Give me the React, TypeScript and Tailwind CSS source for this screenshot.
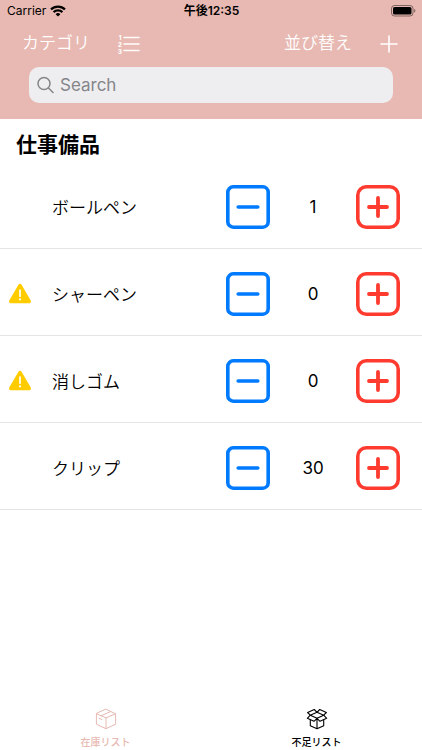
import { useState } from 'react';

interface StockItem {
  id: number;
  name: string;
  count: number;
}

const initialItems: StockItem[] = [
  { id: 1, name: 'ボールペン', count: 1 },
  { id: 2, name: 'シャーペン', count: 0 },
  { id: 3, name: '消しゴム', count: 0 },
  { id: 4, name: 'クリップ', count: 30 },
];

function WifiIcon() {
  return (
    <svg width="16" height="12" viewBox="0 0 16 12" fill="none" stroke="black" strokeWidth="2.2" aria-hidden="true">
      <path d="M1 4.4a10 10 0 0 1 14 0" />
      <path d="M3.6 7.1a6.3 6.3 0 0 1 8.8 0" />
      <path d="M8 11.6 5.6 9.2a3.4 3.4 0 0 1 4.8 0Z" fill="black" stroke="none" />
    </svg>
  );
}

function BatteryIcon() {
  return (
    <svg width="25" height="12" viewBox="0 0 25 12" aria-hidden="true">
      <rect x="0.5" y="0.5" width="21.5" height="10.5" rx="3" fill="none" stroke="black" strokeOpacity="0.45" />
      <rect x="2" y="2" width="18.5" height="7.5" rx="1.6" />
      <path d="M23.2 4v3.6c.8-.3 1.2-1 1.2-1.8s-.4-1.5-1.2-1.8Z" fillOpacity="0.5" />
    </svg>
  );
}

function NumberedListIcon() {
  return (
    <span className="flex items-center gap-px">
      <span className="flex flex-col text-[6px] leading-[7px] font-extrabold" aria-hidden="true">
        <span>1</span>
        <span>2</span>
        <span>3</span>
      </span>
      <svg width="17" height="20" viewBox="0 0 17 20" stroke="white" strokeWidth="1.5" strokeLinecap="round" aria-hidden="true">
        <path d="M1 3.5h15M1 10h15M1 16.5h15" />
      </svg>
    </span>
  );
}

function WarningIcon() {
  return (
    <svg width="24" height="22" viewBox="0 0 24 22" role="img" aria-label="不足">
      <path
        d="M12 2.6 21.2 18.4H2.8Z"
        fill="#ffcc00"
        stroke="#ffcc00"
        strokeWidth="3.6"
        strokeLinejoin="round"
      />
      <path d="M12 7v6.2" stroke="white" strokeWidth="1.7" strokeLinecap="round" />
      <circle cx="12" cy="16.3" r="1.1" fill="white" />
    </svg>
  );
}

function MinusSquare() {
  return (
    <svg width="44" height="44" viewBox="0 0 44 44" fill="none" stroke="#007aff" aria-hidden="true">
      <rect x="1.8" y="1.8" width="40.4" height="40.4" rx="5.5" strokeWidth="3.6" />
      <path d="M12.2 22h19.6" strokeWidth="3.6" strokeLinecap="round" />
    </svg>
  );
}

function PlusSquare() {
  return (
    <svg width="44" height="44" viewBox="0 0 44 44" fill="none" stroke="#ff3b30" aria-hidden="true">
      <rect x="1.8" y="1.8" width="40.4" height="40.4" rx="8.5" strokeWidth="3.6" />
      <path d="M13 22h18M22 13v18" strokeWidth="3.8" strokeLinecap="round" />
    </svg>
  );
}

function ClosedBoxIcon() {
  return (
    <svg width="22" height="22" viewBox="0 0 22 22" fill="none" stroke="currentColor" strokeLinejoin="round" strokeLinecap="round" aria-hidden="true">
      <path d="M11 1.3 20.6 5.8v10.4L11 20.7 1.4 16.2V5.8Z" />
      <path d="M1.4 5.8 11 9.8l9.6-4M11 9.8v10.9M6 7.9l9.7-4.4M4 10.3l2.8 1.3" />
    </svg>
  );
}

function OpenBoxIcon() {
  return (
    <svg width="22" height="22" viewBox="0 0 22 22" fill="none" stroke="currentColor" strokeWidth="1.1" strokeLinejoin="round" aria-hidden="true">
      <path d="M11 4.3 8.3 1.5 1.6 4.5 4.3 7.2 1.3 10.3 8 13.3 11 10.3 14 13.3 20.7 10.3 17.7 7.2 20.4 4.5 13.7 1.5Z" />
      <path d="M11 4.3 4.3 7.2 11 10.3 17.7 7.2Z" />
      <path d="M4.3 11.7v6L11 20.7l6.7-3v-6M11 10.3v10.4" />
    </svg>
  );
}

export default function App() {
  const [items, setItems] = useState(initialItems);
  const [tab, setTab] = useState('stock');

  const change = (id: number, by: number) => {
    setItems(items.map((item) => (item.id === id ? { ...item, count: Math.max(0, item.count + by) } : item)));
  };

  return (
    <div className="min-h-screen flex flex-col bg-white text-black font-['Inter','Noto_Sans_CJK_JP',sans-serif]">
      <header className="bg-[#e8b9b2] pb-4">
        <div className="grid grid-cols-3 items-center h-[22px] pl-[7px] pr-[6px] text-[12px]">
          <div className="flex items-center gap-1">
            <span>Carrier</span>
            <WifiIcon />
          </div>
          <span className="text-center font-semibold">午後12:35</span>
          <div className="flex justify-end">
            <BatteryIcon />
          </div>
        </div>

        <nav className="flex items-center justify-between h-11 mb-px pl-[22px] pr-6 text-[17px] font-[350] text-white">
          <div className="flex items-center gap-7">
            <button type="button">カテゴリ</button>
            <button type="button" aria-label="番号順">
              <NumberedListIcon />
            </button>
          </div>
          <div className="flex items-center gap-7">
            <button type="button">並び替え</button>
            <button type="button" aria-label="追加">
              <svg width="18" height="18" viewBox="0 0 18 18" stroke="white" strokeWidth="1.6" strokeLinecap="round" aria-hidden="true">
                <path d="M1 9h16M9 1v16" />
              </svg>
            </button>
          </div>
        </nav>

        <label className="flex items-center gap-[6px] h-9 mx-[29px] px-2 rounded-[10px] bg-[#eeeef0]">
          <svg width="17" height="18" viewBox="0 0 17 18" fill="none" stroke="#85858a" strokeWidth="1.5" strokeLinecap="round" aria-hidden="true">
            <circle cx="7" cy="7.5" r="6" />
            <path d="m11.5 12 4.5 4.5" />
          </svg>
          <input
            type="search"
            aria-label="Search"
            placeholder="Search"
            className="flex-1 min-w-0 pt-0.5 bg-transparent text-[17px] placeholder:text-[#85858a] focus:outline-none"
          />
        </label>
      </header>

      <main className="flex-1">
        <h1 className="h-[43px] pt-[11px] pl-4 text-[21px] leading-[30px] font-bold">仕事備品</h1>
        <ul>
          {items.map((item) => (
            <li key={item.id} className="flex items-center h-[87px] pt-1 pl-2 pr-[22px] border-b border-[#e5e5e5] text-[17px]">
              <span className="w-11 shrink-0">{item.count === 0 && <WarningIcon />}</span>
              <span className="flex-1 pt-1 font-[350]">{item.name}</span>
              <button type="button" aria-label={`${item.name}を減らす`} onClick={() => change(item.id, -1)}>
                <MinusSquare />
              </button>
              <span className="w-[86px] pt-0.5 text-center">{item.count}</span>
              <button type="button" aria-label={`${item.name}を増やす`} onClick={() => change(item.id, 1)}>
                <PlusSquare />
              </button>
            </li>
          ))}
        </ul>
      </main>

      <footer className="grid grid-cols-2 h-[49px] text-[10px] leading-[14px]">
        <button
          type="button"
          onClick={() => setTab('stock')}
          className={`flex flex-col items-center justify-end gap-[5px] pb-px ${tab === 'stock' ? 'text-[#e8b9b2]' : 'text-black'}`}
        >
          <ClosedBoxIcon />
          <span className="font-medium">在庫リスト</span>
        </button>
        <button
          type="button"
          onClick={() => setTab('short')}
          className={`flex flex-col items-center justify-end gap-[5px] pb-px ${tab === 'short' ? 'text-[#e8b9b2]' : 'text-black'}`}
        >
          <OpenBoxIcon />
          <span className="font-medium">不足リスト</span>
        </button>
      </footer>
    </div>
  );
}
